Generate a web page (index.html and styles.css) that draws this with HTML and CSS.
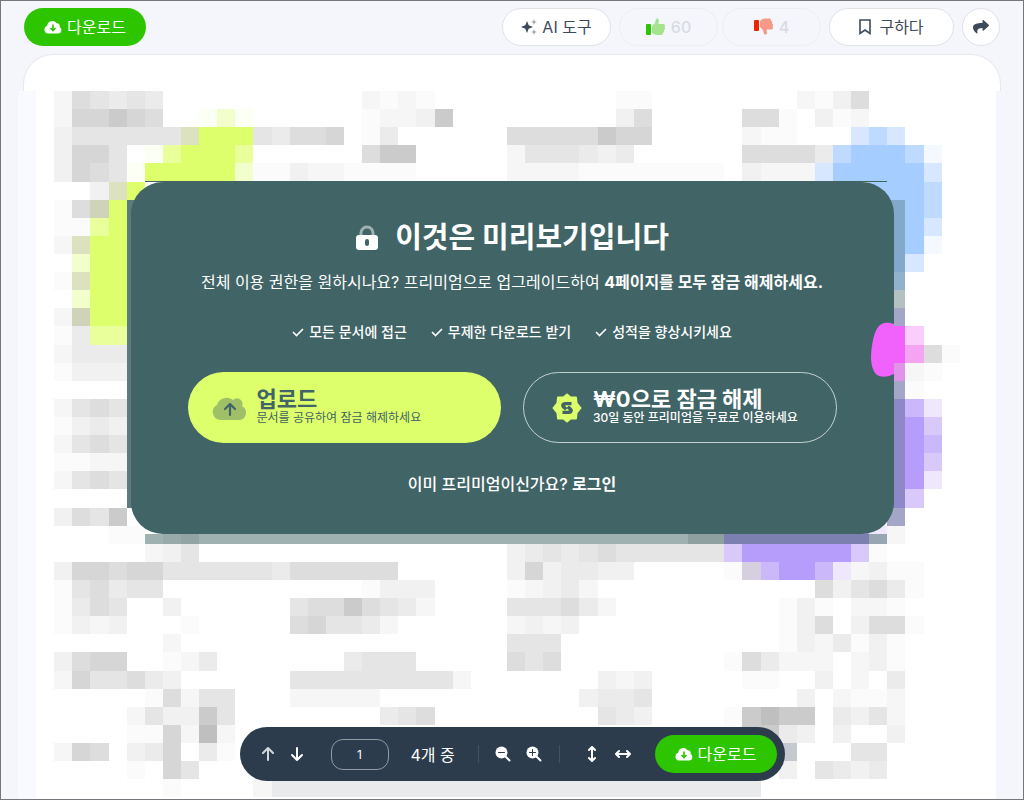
FILE: index.html
```html
<!DOCTYPE html>
<html lang="ko">
<head>
	<meta charset="UTF-8">
	<title>문서 미리보기</title>
	<link rel="stylesheet" href="styles.css">
</head>
<body>
	<header class="topbar">
		<button class="btn download">
			<svg class="icon" width="18" height="14" viewBox="0 0 18 14"><path fill="#fff" d="M4.500 13.500a4 4 0 0 1-1.300-7.800A5.200 5.200 0 0 1 12.600 3.300 2.800 2.800 0 0 1 15.600 7a3.500 3.500 0 0 1-1.100 6.500z"/><path fill="none" stroke="#2dc500" stroke-width="1.600" d="M9 4.500v6M6.500 8L9 10.500 11.500 8"/></svg>
			<span>다운로드</span>
		</button>
		<div class="actions">
			<button class="btn ai">
				<svg class="icon" width="16" height="16" viewBox="0 0 16 16"><path fill="#3c4b5b" d="M6 2l1.700 4.300L12 8 7.700 9.700 6 14 4.300 9.700 0 8l4.300-1.700z"/><path fill="#9ea5ad" d="M13 0l.8 2.200L16 3l-2.200.8L13 6l-.8-2.200L10 3l2.200-.8zM13 10l.8 2.200 2.200.8-2.200.8L13 16l-.8-2.200L10 13l2.200-.8z"/></svg>
				<span>AI 도구</span>
			</button>
			<div class="votes">
				<button class="btn vote">
					<svg class="icon" width="20" height="18" viewBox="0 0 20 18"><rect y="6" width="5" height="11" rx="1" fill="#2dc500"/><path fill="#a5e390" d="M6 8l3-3 1-4c.3-1 3-1 3 1.500L12.500 6H17c2 0 2.500 2 1.500 3 1 1 .7 2.500-.5 3 .6 1.200 0 2.300-1 2.700 0 1.500-.6 2.300-2 2.300h-4c-2 0-3-.8-5-2z"/></svg>
					<span>60</span>
				</button>
				<button class="btn vote">
					<svg class="icon" width="20" height="18" viewBox="0 0 20 18"><rect y="2" width="5" height="11" rx="1" fill="#ee2400"/><path fill="#f59a88" d="M6 3c2-1.500 3-2.500 5-2.500h4c1.400 0 2.200.8 2 2.300 1 .4 1.600 1.500 1 2.700 1.200.5 1.500 2 .5 3 1 1 .5 3-1.500 3h-4.500l.5 3c.3 2.500-2.500 2.500-3 1.500l-1-4-3-3z"/></svg>
					<span>4</span>
				</button>
			</div>
			<button class="btn save">
				<svg class="icon" width="12" height="16" viewBox="0 0 12 16"><path fill="none" stroke="#3c4b5b" stroke-width="1.600" d="M1 1h10v13.500l-5-3.500-5 3.500z"/></svg>
				<span>구하다</span>
			</button>
			<button class="btn share" aria-label="공유">
				<svg class="icon" width="16" height="14" viewBox="0 0 16 14"><path fill="#3c4b5b" d="M9.500.8c0-.8.7-1 1.200-.5l5 4.500c.4.400.4.900 0 1.300l-5 4.500c-.5.500-1.200.200-1.200-.5V8C5.500 8 3.500 9 4.500 13c.1.500-.3.700-.7.400C.5 11 0 9 0 7.500 0 4 4 3 9.500 3z"/></svg>
			</button>
		</div>
	</header>

	<main class="viewer">
		<div class="sheet-top"></div>
		<div class="page">
			<svg id="mosaic" class="mosaic" viewBox="1 5 54 40" shape-rendering="crispEdges" aria-hidden="true"></svg>
		</div>

		<section class="paywall">
			<svg class="blob" width="23" height="56" viewBox="0 0 23 56"><path fill="#f062fb" d="M23 2C11-2 5 3 2 18-1 33-1 45 5 52c4 4 12 3 18 0z"/></svg>
			<h1 class="title">
				<svg class="icon" width="24" height="26" viewBox="0 0 24 26"><path fill="none" stroke="#9fb1b2" stroke-width="3" d="M6 11V8a6 6 0 0 1 12 0v3"/><rect x="1" y="10" width="22" height="15" rx="3" fill="#fff"/><rect x="10" y="14" width="4" height="7" rx="2" fill="#416466"/></svg>
				<span>이것은 미리보기입니다</span>
			</h1>
			<p class="lead">전체 이용 권한을 원하시나요? 프리미엄으로 업그레이드하여 <b>4페이지를 모두 잠금 해제하세요.</b></p>
			<ul class="perks">
				<li><svg class="icon" width="12" height="10" viewBox="0 0 12 10"><path fill="none" stroke="#fff" stroke-width="1.600" d="M1 5l3.500 3.500L11 2"/></svg>모든 문서에 접근</li>
				<li><svg class="icon" width="12" height="10" viewBox="0 0 12 10"><path fill="none" stroke="#fff" stroke-width="1.600" d="M1 5l3.500 3.500L11 2"/></svg>무제한 다운로드 받기</li>
				<li><svg class="icon" width="12" height="10" viewBox="0 0 12 10"><path fill="none" stroke="#fff" stroke-width="1.600" d="M1 5l3.500 3.500L11 2"/></svg>성적을 향상시키세요</li>
			</ul>
			<div class="choices">
				<button class="choice upload">
					<svg class="icon" width="36" height="26" viewBox="0 0 36 26"><path fill="#9fbf69" d="M8 25a8 8 0 0 1-3-15A10 10 0 0 1 21 5a5.500 5.500 0 0 1 9 6 7.500 7.500 0 0 1-2 14z"/><path fill="none" stroke="#416466" stroke-width="2.200" stroke-linecap="round" stroke-linejoin="round" d="M18 20V10M13 14l5-5 5 5"/></svg>
					<span class="label"><strong>업로드</strong><small>문서를 공유하여 잠금 해제하세요</small></span>
				</button>
				<button class="choice unlock">
					<svg class="icon" width="30" height="30" viewBox="0 0 30 30"><path fill="#ddff6b" stroke="#ddff6b" stroke-width="2" stroke-linejoin="round" d="M15 1.500l3.500 3 5.500 0 .5 5.500 4 5-4 5-.5 5.500-5.500 0-3.500 3-3.500-3-5.500 0-.5-5.500-4-5 4-5 .5-5.500 5.500 0z"/><path fill="#416466" d="M13 9h6.500v3.200H14c-.8 0-1 .8-.4 1.300l1.800 1.500-2.300 2.400-2.600-2.200C8 13 9 9 13 9zM17 21h-6.500v-3.200H16c.8 0 1-.8.400-1.300L14.600 15l2.300-2.400 2.600 2.200C22 17 21 21 17 21z"/></svg>
					<span class="label"><strong>₩0으로 잠금 해제</strong><small>30일 동안 프리미엄을 무료로 이용하세요</small></span>
				</button>
			</div>
			<p class="login">이미 프리미엄이신가요? <a href="#">로그인</a></p>
		</section>
	</main>

	<nav class="controls">
		<button class="tool dim" aria-label="이전 페이지"><svg width="14" height="16" viewBox="0 0 14 16"><path d="M7 14V2M2 7l5-5 5 5"/></svg></button>
		<button class="tool" aria-label="다음 페이지"><svg width="14" height="16" viewBox="0 0 14 16"><path d="M7 2v12M2 9l5 5 5-5"/></svg></button>
		<input class="page-no" type="text" value="1" aria-label="페이지">
		<span class="total">4개 중</span>
		<span class="divider"></span>
		<button class="tool" aria-label="축소"><svg width="16" height="16" viewBox="0 0 16 16"><circle cx="6.500" cy="6.500" r="6" fill="#fff" stroke="none"/><path d="M10.500 10.500l4 4"/><path class="cut" d="M3.500 6.500h6"/></svg></button>
		<button class="tool" aria-label="확대"><svg width="16" height="16" viewBox="0 0 16 16"><circle cx="6.500" cy="6.500" r="6" fill="#fff" stroke="none"/><path d="M10.500 10.500l4 4"/><path class="cut" d="M3.500 6.500h6M6.500 3.500v6"/></svg></button>
		<span class="divider"></span>
		<button class="tool" aria-label="높이에 맞춤"><svg width="16" height="16" viewBox="0 0 16 16"><path d="M8 2v12M5 4l3-3 3 3M5 12l3 3 3-3"/></svg></button>
		<button class="tool" aria-label="너비에 맞춤"><svg width="16" height="16" viewBox="0 0 16 16"><path d="M2 8h12M4 5L1 8l3 3M12 5l3 3-3 3"/></svg></button>
		<button class="btn download">
			<svg class="icon" width="18" height="14" viewBox="0 0 18 14"><path fill="#fff" d="M4.500 13.500a4 4 0 0 1-1.300-7.800A5.200 5.200 0 0 1 12.600 3.300 2.800 2.800 0 0 1 15.600 7a3.500 3.500 0 0 1-1.100 6.500z"/><path fill="none" stroke="#2dc500" stroke-width="1.600" d="M9 4.500v6M6.500 8L9 10.500 11.500 8"/></svg>
			<span>다운로드</span>
		</button>
	</nav>
	<script src="mosaic.js"></script>
</body>
</html>
```
FILE: styles.css
```css
*{padding:0;margin:0;box-sizing:border-box;}
body{
	height:100vh;
	display:flex;
	flex-direction:column;
	overflow:hidden;
	position:relative;
	border:1px solid #77767c;
	background:#f5f6fb;
	color:#3c4b5b;
	font-family:Inter,"Noto Sans CJK KR",sans-serif;
	font-size:16px;
}
button,input{
	font:inherit;
	color:inherit;
}
button{
	border:0;
	background:none;
	cursor:pointer;
}
.icon{
	flex:none;
}
/* top bar */
.topbar{
	display:flex;
	justify-content:space-between;
	padding:7px 23px 8px;
}
.actions{
	display:flex;
	gap:8px;
}
.votes{
	display:flex;
	gap:4px;
}
.btn{
	display:flex;
	align-items:center;
	justify-content:center;
	gap:5px;
	height:38px;
	border:1px solid #dfe2e9;
	border-radius:19px;
	background:#fff;
	line-height:24px;
	white-space:nowrap;
}
.download{
	width:122px;
	border:0;
	background:#2dc500;
	color:#fff;
}
.ai{
	width:109px;
}
.vote{
	width:99px;
	background:none;
	border-color:#eceef3;
	color:#d8dce2;
	font-weight:500;
}
.save{
	width:125px;
	gap:8px;
}
.share{
	width:38px;
}
/* document */
.viewer{
	flex:1;
	min-height:0;
	position:relative;
	overflow:hidden;
}
.sheet-top{
	height:37px;
	margin:0 22px;
	border:1px solid #e6e8ee;
	border-bottom:0;
	border-radius:30px 30px 0 0;
	background:#fff;
}
.page{
	margin:0 27px 0 17px;
	background:#fff;
}
.mosaic{
	display:block;
	width:100%;
}
/* preview notice */
.paywall{
	position:absolute;
	top:128px;
	left:0;
	right:0;
	width:763px;
	max-width:90%;
	margin:0 auto;
	padding:36px 57px 38px;
	border-radius:32px;
	background:#416466;
	color:#fff;
	text-align:center;
	overflow:hidden;
}
.blob{
	position:absolute;
	top:140px;
	right:0;
}
.title{
	display:flex;
	justify-content:center;
	align-items:center;
	gap:16px;
	font-size:29px;
	line-height:40px;
	font-weight:700;
}
.lead{
	margin-top:12px;
	font-size:16px;
	line-height:24px;
}
.perks{
	display:flex;
	justify-content:center;
	gap:24px;
	margin-top:28px;
	list-style:none;
	font-size:14px;
	line-height:20px;
	font-weight:500;
}
.perks li{
	display:flex;
	align-items:center;
	gap:5px;
}
.choices{
	display:grid;
	grid-template-columns:1fr 1fr;
	gap:22px;
	margin-top:30px;
}
.choice{
	display:flex;
	align-items:center;
	height:71px;
	padding:0 24px;
	border-radius:36px;
	text-align:left;
	white-space:nowrap;
}
.upload{
	gap:9px;
	background:#ddff6b;
	color:#416466;
}
.unlock{
	gap:11px;
	padding:0 28px;
	border:1px solid #c5d0d1;
	color:#fff;
}
.label{
	display:flex;
	flex-direction:column;
	padding-bottom:2px;
}
.label strong{
	font-size:22px;
	line-height:22px;
	font-weight:700;
}
.label small{
	font-size:12px;
	line-height:16px;
}
.unlock small{
	font-weight:500;
}
.login{
	margin-top:29px;
	font-size:16px;
	line-height:24px;
	font-weight:500;
}
.login a{
	color:#fff;
	font-weight:700;
	text-decoration:none;
}
/* floating page controls */
.controls{
	position:absolute;
	left:0;
	right:0;
	bottom:18px;
	display:flex;
	align-items:center;
	width:545px;
	height:54px;
	margin:0 auto;
	padding:0 8px 0 21px;
	border-radius:27px;
	background:#2d3c4d;
	color:#fff;
}
.tool{
	display:flex;
	margin-right:15px;
}
.tool svg{
	fill:none;
	stroke:#fff;
	stroke-width:2;
	stroke-linecap:round;
	stroke-linejoin:round;
}
.tool svg .cut{
	stroke:#2d3c4d;
	stroke-width:1;
}
.dim{
	opacity:.8;
}
.page-no{
	width:58px;
	height:31px;
	margin:0 22px 0 12px;
	border:1px solid #929aa3;
	border-radius:12px;
	background:none;
	text-align:center;
	font-size:12px;
}
.total{
	white-space:nowrap;
}
.divider{
	width:1px;
	height:18px;
	margin:0 16px 0 23px;
	background:#435161;
}
.tool + .divider{
	margin:0 24px 0 2px;
}
.controls .download{
	margin-left:auto;
}
```
FILE: mosaic.js
```js
/* 흐린 문서: 색 표 */
var colors = {
	'1': '#fbfbfb', '2': '#f6f6f6', '3': '#f1f1f1', '4': '#ebebeb', '5': '#e5e5e5',
	'6': '#dddddd', '7': '#d6d6d6', '8': '#cbcbcb', '9': '#bfbfbf',
	'L': '#ddff6b', 'l': '#e8ff9b', 'm': '#f2ffcc', 'k': '#fcfff3', 'n': '#dce2c0', 'o': '#cfd3ba',
	'B': '#a6cdff', 'b': '#bedbff', 'c': '#d6e7ff', 'd': '#f4f8ff',
	'M': '#f062fb', 'P': '#facdfb', 'q': '#f5a4f4', 'r': '#df94e8',
	'V': '#b69cfb', 'v': '#cbb8fb', 'w': '#d9c9fb', 'x': '#efe8fd', 't': '#d5cfe0',
	'g': '#e9eaec', 'h': '#c3c9cf'
};

/* 행 번호: "시작열:색상들" */
var rows = {
	5: '3:265454 20:2121 34:11 44:2136',
	6: '3:277876 11:kmk 20:12238 34:36 41:661.312',
	7: '3:3555555nLLL54667.14 28:66666877 41:211 47:cbc',
	8: '3:3775.klLLLl 20:688 28:2555434 41:66664bBBBbd',
	9: '3:3765kLLLLLm113221111 28:222211111111 41:3222cBBBBBc',
	10: '5:3nL 48:BBBb',
	11: '3:16oL 49:BBb',
	12: '3:11lL 49:BBc',
	13: '3:2nLL 49:BBd',
	14: '4:mLL 49:Bc',
	15: '3:1nLL 49:b',
	16: '4:mLL 49:3',
	17: '3:2oLL 49:w',
	18: '3:14ll 49:MP',
	19: '3:2444 49:Mq61',
	20: '3:1333 49:r21',
	21: '49:w1',
	22: '3:2565 49:Vvx',
	23: '3:1343 49:VVw',
	24: '3:2565 49:VVv',
	25: '3:1122 49:VVw',
	26: '3:2565 49:VVx',
	27: '49:Vw',
	28: '3:3658 49:w',
	29: '6:11.35 38:66VVVVVVVVx2',
	30: '8:235 28:345456555555wVVVVVVw1',
	31: '3:3776775555554666666 28:3734433 40:1tvVVvx2311',
	32: '3:156455 20:1333 28:12342 45:635641',
	33: '3:1465..3 16:56686542 28:555642 43:131.221',
	34: '3:1323...1 16:675542 28:2323 43:136.3661',
	35: '9:2 28:555 43:1324131',
	36: '3:3677..124 19:4555 28:656 40:164222.231',
	37: '3:2755643 16:5555555552 33:323 41:11..3.2.4',
	38: '8:16255 16:22222 32:3445 44:3.2112',
	39: '7:253385 21:456 33:543 40:18988.4352',
	40: '7:117292 40:18843.3..3',
	41: '3:276.347.41 43:h...55',
	42: '7:1.75 43:3.5434',
	43: '9:1 14:2ggggggggggggggggggggggggggg'
};

var svg = document.getElementById('mosaic');

function rect(x, y, w, h, fill, opacity){
	var r = document.createElementNS('http://www.w3.org/2000/svg', 'rect');
	r.setAttribute('x', x);
	r.setAttribute('y', y);
	r.setAttribute('width', w);
	r.setAttribute('height', h);
	r.setAttribute('fill', fill);
	r.setAttribute('fill-opacity', opacity || 1);
	svg.appendChild(r);
}

rect(1, 5, 1, 40, '#f9faff');

for (var y in rows) {
	rows[y].split(' ').forEach(function(part){
		var p = part.split(':');
		for (var i = 0; i < p[1].length; i++) {
			if (colors[p[1][i]]) {
				rect(+p[0] + i, y, 1, 1, colors[p[1][i]]);
			}
		}
	});
}

/* 안내 상자 뒤의 그림자 조각 */
rect(8, 9.95, 41, 0.1, '#416466');
rect(7, 11, 0.5, 17, '#416466', 0.85);
rect(49, 11, 1, 7, '#416466', 0.35);
rect(49, 21, 1, 8, '#416466', 0.35);
rect(8, 29.45, 41, 0.55, '#416466', 0.5);
```
